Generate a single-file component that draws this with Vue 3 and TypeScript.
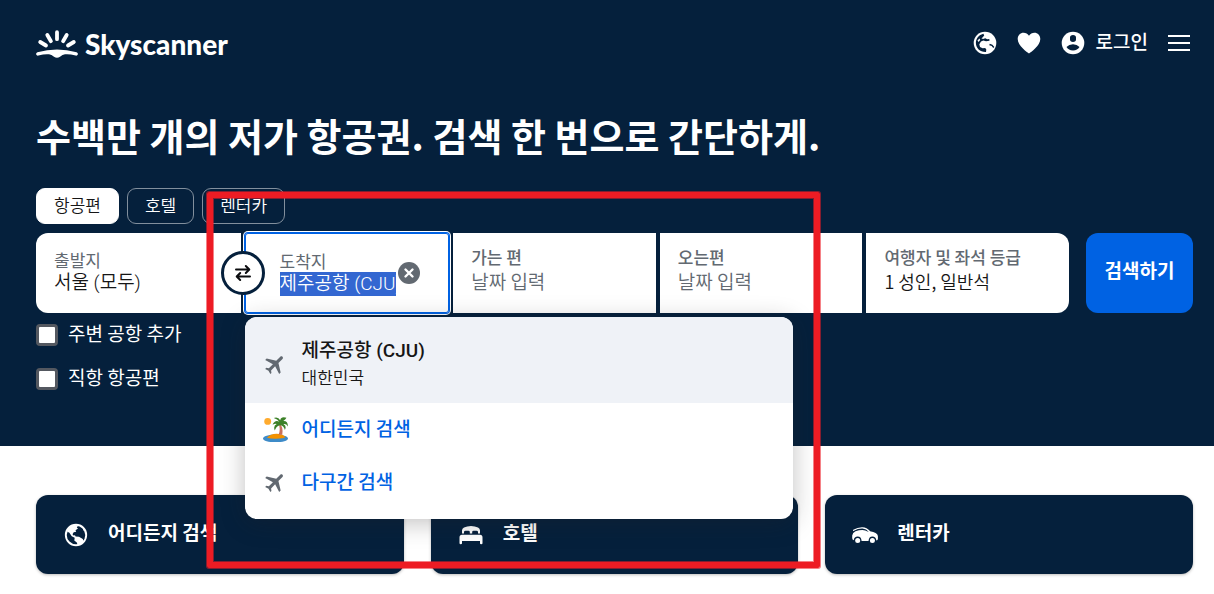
<script setup lang="ts">
import { onMounted, ref } from 'vue'

const tabs = ['항공편', '호텔', '렌터카']
const activeTab = ref('항공편')
const origin = ref('서울 (모두)')
const destination = ref('제주공항 (CJU)')
const destinationInput = ref<HTMLInputElement | null>(null)
const nearby = ref(false)
const direct = ref(false)

const planePath =
  'M21 16v-2l-8-5V3.5c0-.83-.67-1.5-1.5-1.5S10 2.67 10 3.5V9l-8 5v2l8-2.5V19l-2 1.5V22l3.5-1 3.5 1v-1.5L13 19v-5.5l8 2.5z'

function swap() {
  const previous = origin.value
  origin.value = destination.value
  destination.value = previous
}

onMounted(() => {
  destinationInput.value?.focus()
  destinationInput.value?.select()
  if (destinationInput.value) destinationInput.value.scrollLeft = 0
})
</script>

<template>
  <div class="page">
    <section class="hero">
      <header class="header">
        <a class="logo" href="#">
          <svg class="logo-mark" viewBox="0 0 42 28" aria-hidden="true">
            <g stroke="#fff" stroke-width="3.8" stroke-linecap="round" fill="none">
              <path d="M21 2.200v7M11.300 5l3.600 6.200M30.700 5l-3.600 6.200M4.200 12l5.800 3.500M37.800 12l-5.800 3.500" />
            </g>
            <path fill="#fff" d="M1.400 22.300Q21 16.500 40.600 22.300Q42.300 23 41.800 24.600Q41.200 26 39.600 25.600Q33 23.700 29 24.300Q26.500 24.800 24 26.700Q21 29 18 26.700Q15.500 24.800 13 24.300Q9 23.700 2.400 25.600Q.8 26 .2 24.600Q-.3 23 1.400 22.300Z" />
          </svg>
          <span>Skyscanner</span>
        </a>
        <nav class="tools">
          <button class="icon-button" type="button" aria-label="지역 설정">
            <svg viewBox="0 0 24 24" aria-hidden="true">
              <circle cx="12" cy="12" r="11.300" fill="#fff" />
              <path fill="#05203c" d="M8.500 3.400L10.400 2.800L11.200 4.400L9.500 6.400L8.400 7.300L10 8L12.300 7.200L14.200 8.200L16.300 8L16.500 9.800L13 10.200L10.300 9.500L8 10.500L6.300 13.200L7 16L9.600 17.200L12.200 17L13.300 18.500L13 21C7.300 21.300 2.900 17.300 2.900 12C2.900 8 5.200 4.800 8.500 3.400Z" />
              <path fill="#fff" d="M4.500 9.500L6.500 7.500L7.200 9L5.500 11Z" />
              <path fill="none" stroke="#05203c" stroke-width="1.400" d="M16.500 13.500l2.500.8 1.800 2.200" />
            </svg>
          </button>
          <button class="icon-button" type="button" aria-label="저장됨">
            <svg viewBox="0 0 24 24" aria-hidden="true">
              <path fill="#fff" d="M12 22.500C10.300 21.300 .7 14.800 .7 8C.7 4.300 3.300 1.700 6.600 1.700C8.800 1.700 10.800 2.900 12 4.800C13.200 2.900 15.200 1.700 17.400 1.700C20.700 1.700 23.300 4.300 23.300 8C23.300 14.800 13.700 21.300 12 22.500Z" />
            </svg>
          </button>
          <button class="login" type="button">
            <svg viewBox="0 0 24 24" aria-hidden="true">
              <circle cx="12" cy="12" r="11.300" fill="#fff" />
              <path fill="#05203c" d="M9 6.500Q9 3.900 12 3.900T15 6.500V8.500Q15 10.900 12 10.900T9 8.500ZM5.500 16Q8 13.300 12 13.300T18.500 16Q16.500 19.400 12 19.400T5.500 16Z" />
            </svg>
            <span>로그인</span>
          </button>
          <button class="icon-button" type="button" aria-label="메뉴">
            <svg viewBox="0 0 24 24" aria-hidden="true">
              <path d="M1 5h22M1 12h22M1 19h22" stroke="#fff" stroke-width="2" />
            </svg>
          </button>
        </nav>
      </header>

      <h1>수백만 개의 저가 항공권. 검색 한 번으로 간단하게.</h1>

      <div class="tabs">
        <button
          v-for="tab in tabs"
          :key="tab"
          type="button"
          class="tab"
          :class="{ active: tab === activeTab }"
          @click="activeTab = tab"
        >
          {{ tab }}
        </button>
      </div>

      <form class="search" @submit.prevent>
        <div class="fields">
          <div class="field first">
            <label for="origin">출발지</label>
            <input id="origin" v-model="origin" type="text" />
          </div>
          <div class="field destination">
            <button class="swap" type="button" aria-label="출발지와 도착지 바꾸기" @click="swap">
              <svg viewBox="0 0 20 20" aria-hidden="true">
                <path d="M3 6.500h13M12.800 3l3.500 3.500-3.500 3.500M17 13.500H4M7.200 10L3.700 13.500 7.200 17" fill="none" stroke="#0b0c0f" stroke-width="2" stroke-linecap="round" stroke-linejoin="round" />
              </svg>
            </button>
            <div class="destination-text">
              <label for="destination">도착지</label>
              <input id="destination" ref="destinationInput" v-model="destination" type="text" autocomplete="off" />
            </div>
            <button class="clear" type="button" aria-label="지우기" @click="destination = ''">
              <svg viewBox="0 0 22 22" aria-hidden="true">
                <circle cx="11" cy="11" r="11" fill="#626971" />
                <path d="M7.500 7.500l7 7M14.500 7.500l-7 7" stroke="#fff" stroke-width="2.400" stroke-linecap="round" />
              </svg>
            </button>
            <div class="suggestions">
              <button class="suggestion selected" type="button">
                <svg class="plane" viewBox="0 0 24 24" aria-hidden="true">
                  <path :d="planePath" transform="rotate(45 12 12)" fill="#626971" />
                </svg>
                <span class="place">
                  <strong>제주공항 (CJU)</strong>
                  <small>대한민국</small>
                </span>
              </button>
              <button class="suggestion" type="button">
                <svg viewBox="0 0 24 24" aria-hidden="true">
                  <circle cx="4.500" cy="4.200" r="3.300" fill="#ffab2e" />
                  <ellipse cx="12" cy="20.600" rx="12" ry="3.700" fill="#3e8bc8" />
                  <path d="M3.800 20Q7 16 13 16Q19 16 21.500 19.200Q20 20.800 12.500 20.900Q7 21 3.800 20Z" fill="#f29100" />
                  <path d="M15.800 5.500Q19.800 10 18.500 17H15Q17.200 11 14.700 6Z" fill="#c8705c" />
                  <path d="M15.700 4.600Q11.500 2.300 9.200 7.500Q11.500 6 13.200 6.700Q9.500 8.500 11.300 13Q12.600 8.900 16 7.900Q20 7.800 21 12.500Q23 8.500 19.600 6.900Q22 6 24 9Q23.800 3.400 19.500 3.800Q22 2.300 22.500 .8Q17.500-.8 16.500 3Q14.500-.4 10.300 1Q14 2 15.700 4.600Z" fill="#3d8129" />
                </svg>
                <strong>어디든지 검색</strong>
              </button>
              <button class="suggestion" type="button">
                <svg class="plane" viewBox="0 0 24 24" aria-hidden="true">
                  <path :d="planePath" transform="rotate(45 12 12)" fill="#626971" />
                </svg>
                <strong>다구간 검색</strong>
              </button>
            </div>
          </div>
          <button class="field picker" type="button">
            <span class="caption">가는 편</span>
            <span class="value empty">날짜 입력</span>
          </button>
          <button class="field picker" type="button">
            <span class="caption">오는편</span>
            <span class="value empty">날짜 입력</span>
          </button>
          <button class="field picker last" type="button">
            <span class="caption">여행자 및 좌석 등급</span>
            <span class="value">1 성인, 일반석</span>
          </button>
        </div>
        <button class="submit" type="submit">검색하기</button>
      </form>

      <div class="options">
        <label><input v-model="nearby" type="checkbox" /><span>주변 공항 추가</span></label>
        <label><input v-model="direct" type="checkbox" /><span>직항 항공편</span></label>
      </div>
    </section>

    <nav class="cards">
      <a class="card" href="#">
        <svg viewBox="0 0 26 26" aria-hidden="true">
          <circle cx="13" cy="13" r="10.200" fill="none" stroke="#fff" stroke-width="1.900" />
          <path fill="#fff" d="M4 9.500Q6 3.800 12 2.900L15.200 3.500L13.800 5.500L15 6.600L12.500 8.300L13.200 9.800L10.700 10.200L9.500 12.300L10.500 13.500L12 13.200L12.600 14.500L16 14.800L19.800 17L20.700 19.800Q18.500 22.600 14.700 23.200L13.800 20.500L11.300 18.500L11.700 15.800L8.700 14.200L6.400 10.700Z" />
          <path fill="#fff" d="M19.500 5.500L22.500 9.500L20.800 9Z" />
        </svg>
        <span>어디든지 검색</span>
      </a>
      <a class="card" href="#">
        <svg viewBox="0 0 26 26" aria-hidden="true">
          <path fill="#fff" d="M4 11.500V8.500Q4 6.500 6 5.500Q9 3.900 13 3.900T20 5.500Q22 6.500 22 8.500V11.500H20V10Q20 8.700 18.500 8.700H15.500Q14.200 8.700 14.200 10V11.500H11.800V10Q11.800 8.700 10.500 8.700H7.500Q6 8.700 6 10V11.500ZM4 12.800H22Q24.500 12.800 24.500 15.500V21.200Q24.500 22.300 23.200 22.300T22 21.200V19H4V21.200Q4 22.300 2.800 22.300T1.500 21.200V15.500Q1.500 12.800 4 12.800Z" />
        </svg>
        <span>호텔</span>
      </a>
      <a class="card" href="#">
        <svg viewBox="0 0 26 26" aria-hidden="true">
          <path fill="none" stroke="#fff" stroke-width="1.300" stroke-linecap="round" d="M1.600 8.300Q6 5.600 10.500 5.800Q14.500 6 17.500 9.500" />
          <path fill="#fff" d="M3.500 9.300Q7 8 10.500 8Q13.500 8.200 15.500 9.600L18 9.200Q25.300 10.300 25.900 14V16.800Q25.900 18.300 24.400 18.400Q23.800 14.600 20.400 14.600T16.500 18.900H9.600Q9.200 14.600 5.700 14.600T1.700 18.300Q.2 18 .2 16V13.500Q.6 10.800 3.500 9.300Z" />
          <circle cx="5.700" cy="18.400" r="2.500" fill="#fff" />
          <circle cx="20.400" cy="18.400" r="2.500" fill="#fff" />
        </svg>
        <span>렌터카</span>
      </a>
    </nav>

    <div class="highlight" aria-hidden="true"></div>
  </div>
</template>

<style>
body {
  margin: 0;
  background: #fff;
}
</style>

<style scoped>
.page {
  position: relative;
  font-family: "Noto Sans CJK KR", "Noto Sans", sans-serif;
  color: #161616;
}
.page *,
.page *::before {
  box-sizing: border-box;
}
button,
input {
  font: inherit;
  color: inherit;
  margin: 0;
}
button {
  border: 0;
  padding: 0;
  background: none;
  cursor: pointer;
}
svg {
  display: block;
  flex: none;
}
.hero {
  background: #05203c;
  color: #fff;
  padding: 24px 21px 53px 36px;
}
.header {
  display: flex;
  justify-content: space-between;
  align-items: center;
  height: 40px;
}
.logo {
  display: flex;
  align-items: center;
  gap: 7px;
  color: #fff;
  text-decoration: none;
  font: 900 28px/40px Lato, sans-serif;
}
.logo-mark {
  width: 42px;
  height: 28px;
}
.tools {
  display: flex;
  align-items: center;
  gap: 20px;
  padding: 0 2px 2px 0;
}
.tools svg {
  width: 24px;
  height: 24px;
}
.login {
  display: flex;
  align-items: center;
  gap: 11px;
  font-size: 19px;
  line-height: 24px;
  font-weight: 500;
}
.login span {
  padding-bottom: 4px;
}
.tools .login + .icon-button {
  margin-left: -1px;
}
h1 {
  margin: 44px 0 26px;
  font-size: 38px;
  line-height: 54px;
  font-weight: 700;
}
.tabs {
  display: flex;
  gap: 8px;
}
.tab {
  height: 36px;
  padding: 0 17px 2px;
  border: 1px solid #828f9d;
  border-radius: 9px;
  font-size: 17px;
  line-height: 32px;
  font-weight: 350;
}
.tab.active {
  background: #fff;
  border-color: #fff;
  color: #161616;
}
.search {
  display: flex;
  gap: 17px;
  margin-top: 9px;
}
.fields {
  flex: 1;
  display: grid;
  grid-template-columns: 205fr 205fr 203fr 203fr 203fr;
  gap: 4px;
}
.field {
  min-width: 0;
  height: 80px;
  background: #fff;
  color: #161616;
  padding: 13px 18px;
  text-align: left;
}
.first {
  border-radius: 12px 0 0 12px;
  padding-top: 16px;
}
.last {
  border-radius: 0 12px 12px 0;
}
.field label,
.caption {
  display: block;
  font-size: 17px;
  line-height: 22px;
  color: #626971;
}
.caption {
  font-weight: 500;
}
.field input {
  display: block;
  width: 100%;
  height: 24px;
  border: 0;
  padding: 0;
  outline: 0;
  background: none;
  font-family: Roboto, "Noto Sans CJK KR", sans-serif;
  font-size: 19px;
  line-height: 24px;
  font-weight: 350;
}
.field input::selection {
  background: #3367d1;
  color: #fff;
}
.value {
  display: block;
  font-size: 18px;
  line-height: 26px;
  font-weight: 350;
  white-space: nowrap;
}
.value.empty {
  font-size: 19px;
  color: #626971;
}
.picker {
  display: flex;
  flex-direction: column;
}
.destination {
  position: relative;
  display: flex;
  align-items: center;
  gap: 2px;
  padding: 0 29px 0 35px;
  border-radius: 3px;
  box-shadow: inset 0 0 0 1px #0062e3, 0 0 0 1px #0062e3, 0 0 0 2px #fff;
}
.destination-text {
  flex: 1;
  min-width: 0;
}
.swap {
  position: absolute;
  left: -24px;
  top: 18px;
  width: 44px;
  height: 44px;
  display: grid;
  place-items: center;
  border: 3px solid #05203c;
  border-radius: 50%;
  background: #fff;
}
.swap svg {
  width: 20px;
  height: 20px;
}
.clear svg {
  width: 22px;
  height: 22px;
}
.suggestions {
  position: absolute;
  z-index: 2;
  top: 84px;
  left: 0;
  width: 548px;
  padding-bottom: 10px;
  border-radius: 12px;
  overflow: hidden;
  background: #fff;
  box-shadow: 0 4px 24px rgba(37, 32, 31, 0.28);
}
.suggestion {
  display: flex;
  align-items: center;
  gap: 14px;
  width: 100%;
  height: 53px;
  padding: 0 18px;
  text-align: left;
  font-size: 19px;
  line-height: 28px;
  color: #0062e3;
}
.suggestion svg {
  width: 25px;
  height: 25px;
}
.suggestion strong {
  font-weight: 500;
  padding-bottom: 4px;
}
.selected {
  height: 86px;
  padding-top: 8px;
  background: #eff2f7;
  color: #161616;
}
.selected strong {
  font-family: Roboto, "Noto Sans CJK KR", sans-serif;
  line-height: 26px;
  padding-bottom: 0;
}
.place {
  display: flex;
  flex-direction: column;
}
.place small {
  font-size: 17px;
  line-height: 26px;
  font-weight: 350;
}
.submit {
  width: 107px;
  height: 80px;
  border-radius: 12px;
  background: #0062e3;
  color: #fff;
  font-size: 19px;
  line-height: 28px;
  font-weight: 700;
  padding-bottom: 6px;
}
.options {
  display: flex;
  flex-direction: column;
  gap: 16px;
  margin-top: 8px;
}
.options label {
  display: flex;
  align-items: center;
  gap: 10px;
  align-self: flex-start;
  font-size: 19px;
  line-height: 24px;
  height: 28px;
}
.options span {
  padding-bottom: 4px;
}
.options input {
  appearance: none;
  width: 22px;
  height: 22px;
  border: 3px solid #545860;
  border-radius: 4px;
  background: #fff;
}
.options input:checked {
  background: #0062e3;
}
.cards {
  display: grid;
  grid-template-columns: repeat(3, 1fr);
  gap: 27px;
  padding: 49px 21px 20px 36px;
}
.card {
  display: flex;
  align-items: center;
  gap: 19px;
  height: 79px;
  padding: 0 27px;
  border-radius: 12px;
  background: #05203c;
  color: #fff;
  text-decoration: none;
  font-size: 19px;
  line-height: 28px;
  font-weight: 700;
  box-shadow: 0 1px 3px rgba(37, 32, 31, 0.3);
}
.card svg {
  width: 26px;
  height: 26px;
}
.card span {
  padding-bottom: 5px;
}
.highlight {
  position: absolute;
  z-index: 5;
  left: 207px;
  top: 192px;
  width: 613px;
  height: 376px;
  border: 6px solid #ed1c24;
  border-radius: 2px;
  box-shadow: 0 0 0 1px rgba(237, 28, 36, 0.55), inset 0 0 0 1px rgba(237, 28, 36, 0.55);
  pointer-events: none;
}
</style>
